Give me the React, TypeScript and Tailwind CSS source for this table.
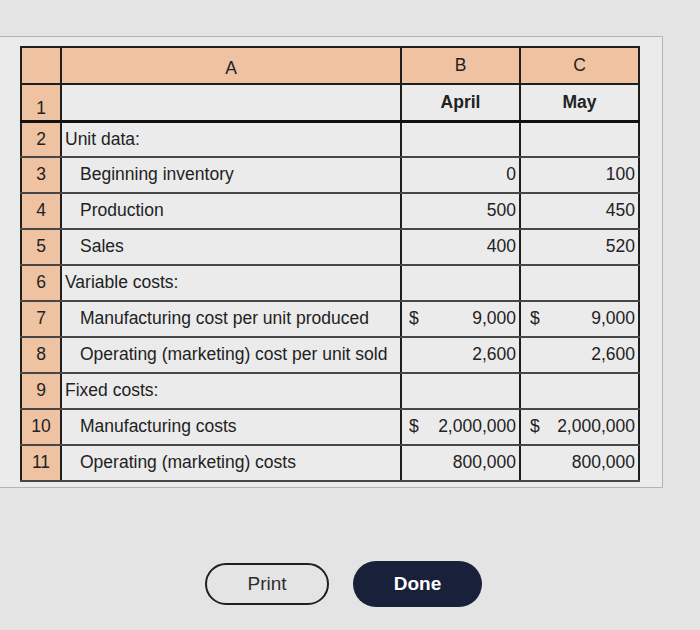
import React from "react";

type Row = {
  n: number;
  label: string;
  indent?: boolean;
  b?: string;
  c?: string;
  dollar?: boolean;
};

const rows: Row[] = [
  { n: 2, label: "Unit data:" },
  { n: 3, label: "Beginning inventory", indent: true, b: "0", c: "100" },
  { n: 4, label: "Production", indent: true, b: "500", c: "450" },
  { n: 5, label: "Sales", indent: true, b: "400", c: "520" },
  { n: 6, label: "Variable costs:" },
  { n: 7, label: "Manufacturing cost per unit produced", indent: true, b: "9,000", c: "9,000", dollar: true },
  { n: 8, label: "Operating (marketing) cost per unit sold", indent: true, b: "2,600", c: "2,600" },
  { n: 9, label: "Fixed costs:" },
  { n: 10, label: "Manufacturing costs", indent: true, b: "2,000,000", c: "2,000,000", dollar: true },
  { n: 11, label: "Operating (marketing) costs", indent: true, b: "800,000", c: "800,000" },
];

function ValueCell({ value, dollar, col }: { value?: string; dollar?: boolean; col: "b" | "c" }) {
  return (
    <td className="border-x-2 border-x-[#1e1e1e] border-y-2 border-y-[#474747] p-0">
      <div className={`flex items-center justify-between pr-[3px] ${col === "b" ? "pl-[7px]" : "pl-[9px]"}`}>
        <span>{dollar ? "$" : ""}</span>
        <span>{value ?? ""}</span>
      </div>
    </td>
  );
}

export default function App() {
  return (
    <div
      className="w-[700px] h-[630px] overflow-hidden bg-[#e4e4e4] text-[#222]"
      style={{ fontFamily: '"Liberation Sans", Arial, sans-serif' }}
    >
      <div className="mt-[36px] ml-[-2px] w-[665px] h-[452px] border border-[#b3b3b3] bg-[#ebebeb] pl-[21px] pt-[9px]">
        <table className="border-collapse table-fixed text-[17.5px] leading-none">
          <colgroup>
            <col className="w-[40px]" />
            <col className="w-[340px]" />
            <col className="w-[119px]" />
            <col className="w-[119px]" />
          </colgroup>
          <thead>
            <tr className="h-[37px] bg-[#efc2a2]">
              <th className="border-2 border-[#1e1e1e]" />
              <th className="border-2 border-[#1e1e1e] font-normal text-center pt-[6px]">A</th>
              <th className="border-2 border-[#1e1e1e] font-normal text-center">B</th>
              <th className="border-2 border-[#1e1e1e] font-normal text-center">C</th>
            </tr>
          </thead>
          <tbody>
            <tr className="h-[37px]">
              <td className="bg-[#efc2a2] border-x-2 border-x-[#1e1e1e] border-b-[3px] border-b-[#111] text-center align-bottom pb-[2px]">
                1
              </td>
              <td className="border-x-2 border-x-[#1e1e1e] border-b-[3px] border-b-[#111]" />
              <td className="border-x-2 border-x-[#1e1e1e] border-b-[3px] border-b-[#111] text-center font-bold">April</td>
              <td className="border-x-2 border-x-[#1e1e1e] border-b-[3px] border-b-[#111] text-center font-bold">May</td>
            </tr>
            {rows.map((r) => (
              <tr key={r.n} className="h-[36px]">
                <td className="bg-[#efc2a2] border-x-2 border-x-[#1e1e1e] border-y-2 border-y-[#474747] text-center">
                  {r.n}
                </td>
                <td
                  className={`border-x-2 border-x-[#1e1e1e] border-y-2 border-y-[#474747] whitespace-nowrap ${
                    r.indent ? "pl-[18px]" : "pl-[3px]"
                  }`}
                >
                  {r.label}
                </td>
                <ValueCell value={r.b} dollar={r.dollar} col="b" />
                <ValueCell value={r.c} dollar={r.dollar} col="c" />
              </tr>
            ))}
          </tbody>
        </table>
      </div>

      <div className="flex items-center gap-[24px] pl-[205px] mt-[73px]">
        <button className="w-[124px] h-[42px] rounded-full border-2 border-[#1f1f1f] bg-transparent text-[19px] text-[#2e2e2e]">
          Print
        </button>
        <button className="w-[129px] h-[46px] rounded-full bg-[#18203a] text-[19px] font-semibold text-white">
          Done
        </button>
      </div>
    </div>
  );
}
